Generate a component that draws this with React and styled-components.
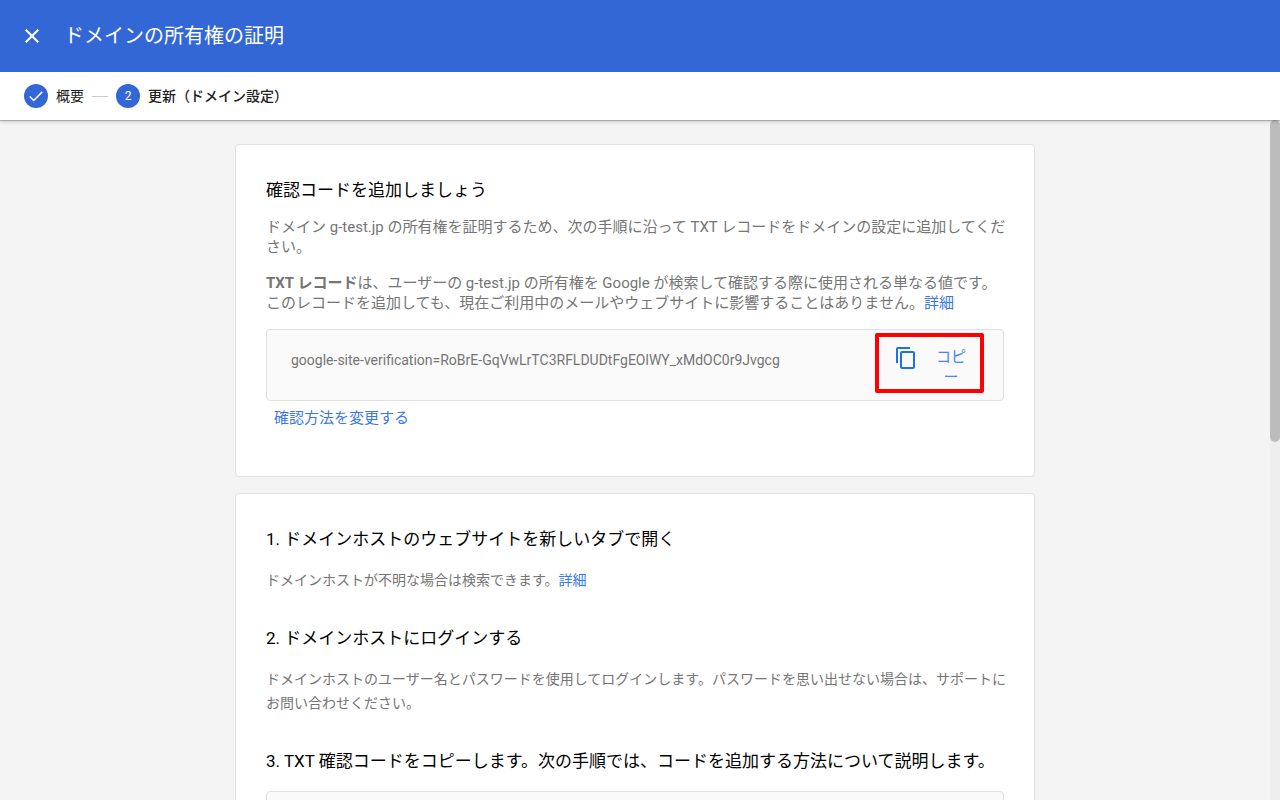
import React from 'react';
import styled, { createGlobalStyle } from 'styled-components';

const CODE = 'google-site-verification=RoBrE-GqVwLrTC3RFLDUDtFgEOlWY_xMdOC0r9Jvgcg';

const GlobalStyle = createGlobalStyle`
    *{
        box-sizing: border-box;
    }
    body{
        margin: 0;
        font-family: Roboto, "Noto Sans CJK JP", sans-serif;
        color: #000;
    }
    h1, h2, p{
        margin: 0;
    }
    button{
        font-family: inherit;
        background: none;
        border: none;
        padding: 0;
        cursor: pointer;
    }
`;

const CloseIcon = () => (
    <svg width="24" height="24" viewBox="0 0 24 24" fill="currentColor" aria-hidden="true">
        <path d="M19 6.41L17.59 5 12 10.59 6.41 5 5 6.41 10.59 12 5 17.59 6.41 19 12 13.41 17.59 19 19 17.59 13.41 12z" />
    </svg>
);

const CheckIcon = () => (
    <svg width="16" height="16" viewBox="0 0 24 24" fill="none" stroke="currentColor" strokeWidth="2.2" aria-hidden="true">
        <path d="M2.6 12.6L8.6 18.6L21.4 5.8" />
    </svg>
);

const CopyIcon = () => (
    <svg width="24" height="24" viewBox="0 0 24 24" fill="#1a73e8" aria-hidden="true">
        <path d="M16 1H4c-1.1 0-2 .9-2 2v14h2V3h12V1zm3 4H8c-1.1 0-2 .9-2 2v14c0 1.1.9 2 2 2h11c1.1 0 2-.9 2-2V7c0-1.1-.9-2-2-2zm0 16H8V7h11v14z" />
    </svg>
);

const VerificationCode = ({ highlighted }) => (
    <CodeBox>
        <Code>{CODE}</Code>
        <CopyButton type="button" $highlighted={highlighted}>
            <CopyIcon />
            <CopyLabel>コピー</CopyLabel>
        </CopyButton>
    </CodeBox>
);

const App = () => {
    return (
        <Page>
            <GlobalStyle />
            <Header>
                <TitleBar>
                    <CloseButton type="button" aria-label="閉じる"><CloseIcon /></CloseButton>
                    <Title>ドメインの所有権の証明</Title>
                </TitleBar>
                <Steps>
                    <Step>
                        <StepBadge><CheckIcon /></StepBadge>
                        概要
                    </Step>
                    <StepLine aria-hidden="true" />
                    <Step $current aria-current="step">
                        <StepBadge>2</StepBadge>
                        更新（ドメイン設定）
                    </Step>
                </Steps>
            </Header>

            <Body>
                <Scroller>
                    <Card>
                        <Heading>確認コードを追加しましょう</Heading>
                        <Intro>
                            <p>ドメイン g-test.jp の所有権を証明するため、次の手順に沿って TXT レコードをドメインの設定に追加してください。</p>
                            <p>
                                <b>TXT レコード</b>は、ユーザーの g-test.jp の所有権を Google が検索して確認する際に使用される単なる値です。このレコードを追加しても、現在ご利用中のメールやウェブサイトに影響することはありません。<Link href="#record">詳細</Link>
                            </p>
                        </Intro>
                        <VerificationCode highlighted />
                        <ChangeMethod type="button">確認方法を変更する</ChangeMethod>
                    </Card>

                    <Card>
                        <Section>
                            <Heading>1. ドメインホストのウェブサイトを新しいタブで開く</Heading>
                            <Text>ドメインホストが不明な場合は検索できます。<Link href="#host">詳細</Link></Text>
                        </Section>
                        <Section>
                            <Heading>2. ドメインホストにログインする</Heading>
                            <Text>ドメインホストのユーザー名とパスワードを使用してログインします。パスワードを思い出せない場合は、サポートにお問い合わせください。</Text>
                        </Section>
                        <Section>
                            <Heading>3. TXT 確認コードをコピーします。次の手順では、コードを追加する方法について説明します。</Heading>
                            <VerificationCode />
                        </Section>
                    </Card>
                </Scroller>
                <Track aria-hidden="true"><Thumb /></Track>
            </Body>
        </Page>
    )
}

const Page = styled.div`
    height: 100vh;
    display: flex;
    flex-direction: column;
`;

const Header = styled.header`
    position: relative;
    z-index: 1;
    background: #fff;
    box-shadow: 0 1px 1px rgba(0, 0, 0, 0.2), 0 1px 5px rgba(0, 0, 0, 0.2);
`;

const TitleBar = styled.div`
    display: flex;
    align-items: center;
    gap: 20px;
    height: 72px;
    padding: 0 20px;
    background: #3367d6;
    color: #fff;
`;

const CloseButton = styled.button`
    display: flex;
    color: inherit;
`;

const Title = styled.h1`
    font-size: 20px;
    line-height: 28px;
    font-weight: 400;
`;

const Steps = styled.ol`
    display: flex;
    align-items: center;
    gap: 8px;
    height: 48px;
    margin: 0;
    padding: 0 24px;
    list-style: none;
`;

const Step = styled.li`
    display: flex;
    align-items: center;
    gap: 8px;
    font-size: 14px;
    line-height: 24px;
    font-weight: ${({ $current }) => ($current ? 500 : 400)};
    color: #212121;
`;

const StepBadge = styled.span`
    display: flex;
    align-items: center;
    justify-content: center;
    width: 24px;
    height: 24px;
    border-radius: 50%;
    background: #3367d6;
    color: #fff;
    font-size: 12px;
    font-weight: 400;
`;

const StepLine = styled.li`
    width: 16px;
    height: 1px;
    background: #ccc;
`;

const Body = styled.div`
    flex: 1;
    min-height: 0;
    display: flex;
    background: #f4f4f4;
`;

const Scroller = styled.main`
    flex: 1;
    display: flex;
    flex-direction: column;
    align-items: center;
    gap: 16px;
    padding: 24px 16px;
    overflow-y: auto;
    scrollbar-width: none;
`;

/* the right side is narrower so that running text may hang past the code boxes */
const Card = styled.section`
    flex: none;
    width: 100%;
    max-width: 800px;
    padding: 31px 26px 30px 30px;
    background: #fff;
    border: 1px solid #e0e0e0;
    border-radius: 4px;
`;

const Heading = styled.h2`
    font-size: 17px;
    line-height: 28px;
    font-weight: 400;
`;

const Intro = styled.div`
    display: flex;
    flex-direction: column;
    gap: 16px;
    margin-top: 13px;
    font-size: 15px;
    line-height: 20px;
    color: #757575;
`;

const Link = styled.a`
    color: #3b78e7;
    text-decoration: none;
`;

const CodeBox = styled.div`
    display: flex;
    justify-content: space-between;
    min-height: 72px;
    margin: 16px 4px 0 0;
    padding: 3px 19px 7px 24px;
    background: #fafafa;
    border: 1px solid #e0e0e0;
    border-radius: 4px;
`;

const Code = styled.span`
    padding-top: 17px;
    font-size: 14px;
    line-height: 20px;
    color: #757575;
    overflow-wrap: anywhere;
`;

const CopyButton = styled.button`
    flex: none;
    display: flex;
    align-items: flex-start;
    gap: 18px;
    padding: 9px 14px 2px 15px;
    border: 4px solid ${({ $highlighted }) => ($highlighted ? '#f00' : 'transparent')};
    border-radius: 2px;
`;

const CopyLabel = styled.span`
    width: 30px;
    padding-top: 1px;
    font-size: 15px;
    line-height: 20px;
    color: #4285f4;
    text-align: center;
    line-break: anywhere;
`;

const ChangeMethod = styled.button`
    display: block;
    margin: 7px 8px 18px;
    font-size: 15px;
    line-height: 20px;
    color: #3b78e7;
`;

const Section = styled.div`
    & + &{
        margin-top: 32px;
    }
`;

const Text = styled.p`
    margin-top: 15px;
    font-size: 14px;
    line-height: 24px;
    color: #757575;
`;

const Track = styled.div`
    width: 10px;
    background: #eee;
`;

const Thumb = styled.div`
    height: calc(100% * 9 / 19);
    border-radius: 5px;
    background: #bcbcbc;
`;

export default App;
